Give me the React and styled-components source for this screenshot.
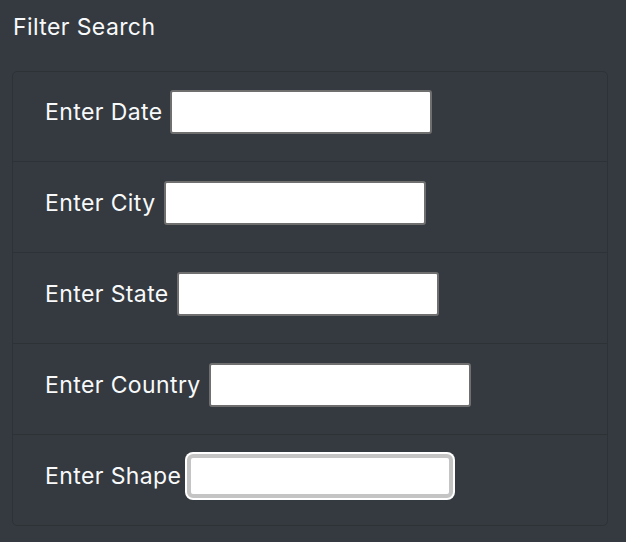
import React from "react";
import styled, { createGlobalStyle } from "styled-components";

const fields = [
  { id: "date", label: "Enter Date" },
  { id: "city", label: "Enter City" },
  { id: "state", label: "Enter State" },
  { id: "country", label: "Enter Country" },
  { id: "shape", label: "Enter Shape", focused: true },
];

const GlobalStyle = createGlobalStyle`
  html, body {
    margin: 0;
    padding: 0;
    background: #343a40;
  }
  body {
    font-family: Inter, "Liberation Sans", sans-serif;
    color: #f8f9fa;
  }
`;

const Page = styled.div`
  width: 626px;
  height: 542px;
  padding: 12px 18px 0 12px;
  box-sizing: border-box;
`;

const Title = styled.h4`
  margin: 0 0 29px 1px;
  font-size: 23px;
  letter-spacing: 0.4px;
  font-weight: 400;
  line-height: 30px;
`;

const List = styled.ul`
  margin: 0;
  padding: 0;
  list-style: none;
  border: 1px solid rgba(0, 0, 0, 0.13);
  border-radius: 5px;
`;

const Item = styled.li`
  display: flex;
  align-items: flex-start;
  height: ${(p) => (p.first ? "89px" : "91px")};
  box-sizing: border-box;
  padding: ${(p) => (p.first ? "18px" : "19px")} 32px 0;
  border-top: ${(p) => (p.first ? "none" : "1px solid rgba(0, 0, 0, 0.13)")};
`;

const Label = styled.label`
  font-size: 23px;
  letter-spacing: 0.4px;
  line-height: 44px;
  margin-right: 8px;
  white-space: nowrap;
`;

const Input = styled.input`
  width: 262px;
  height: 44px;
  box-sizing: border-box;
  background: #fff;
  border: 2px solid #6f6f6f;
  border-radius: 3px;
  outline: none;
  ${(p) =>
    p.focused &&
    "border: 4px solid #c4c4c4; border-radius: 6px; box-shadow: 0 0 0 2px #fff; margin-left: -2px; width: 266px;"}
`;

export default function App() {
  return (
    <>
      <GlobalStyle />
      <Page>
        <Title>Filter Search</Title>
        <List>
          {fields.map((f, i) => (
            <Item key={f.id} first={i === 0}>
              <Label htmlFor={f.id}>{f.label}</Label>
              <Input id={f.id} type="text" focused={f.focused} />
            </Item>
          ))}
        </List>
      </Page>
    </>
  );
}
